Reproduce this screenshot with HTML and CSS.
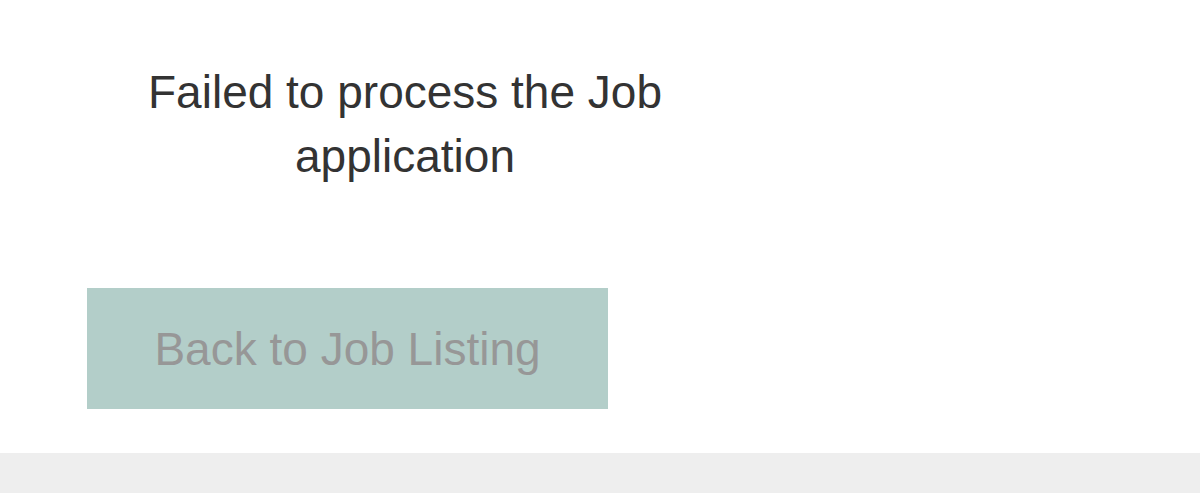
FILE: index.html
```html
<!DOCTYPE html>
<html lang="en">
<head>
<meta charset="utf-8">
<title>Job application</title>
<link rel="stylesheet" href="styles.css">
</head>
<body>
<main class="page">
  <section class="content">
    <h1 class="message">Failed to process the Job application</h1>
    <a class="back-btn" href="#">Back to Job Listing</a>
  </section>
</main>
<footer class="footer"></footer>
</body>
</html>
```

FILE: styles.css
```css
html, body {
  margin: 0;
  padding: 0;
  background: #ffffff;
}
body {
  font-family: "Liberation Sans", Arial, Helvetica, sans-serif;
  height: 493px;
  display: flex;
  flex-direction: column;
  overflow: hidden;
}
.page {
  flex: 1;
}
.content {
  width: 636px;
  padding: 60px 0 0 87px;
  display: flex;
  flex-direction: column;
  align-items: flex-start;
}
.message {
  width: 636px;
  margin: 0;
  font-size: 46px;
  line-height: 64px;
  font-weight: normal;
  color: #333333;
  text-align: center;
}
.back-btn {
  margin-top: 100px;
  width: 521px;
  height: 121px;
  background: #b3cec9;
  color: #979797;
  font-size: 46px;
  text-decoration: none;
  display: flex;
  align-items: center;
  justify-content: center;
}
.footer {
  height: 40px;
  background: #eeeeee;
}
```
